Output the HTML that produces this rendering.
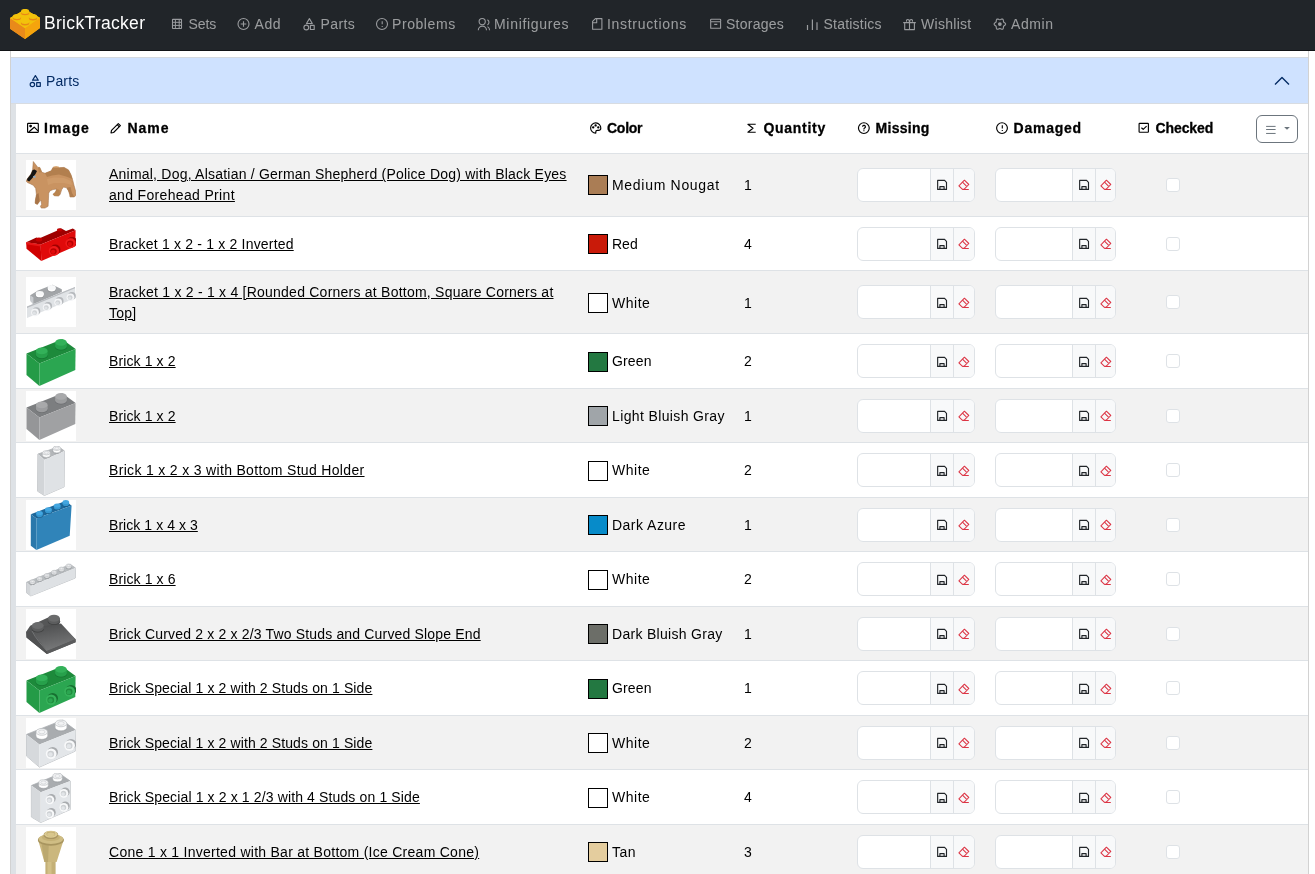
<!DOCTYPE html><html><head><meta charset="utf-8"><title>BrickTracker</title><style>
*{box-sizing:border-box;margin:0;padding:0}
html,body{width:1315px;height:874px;overflow:hidden;-webkit-font-smoothing:antialiased;background:#fff;font-family:"Liberation Sans", sans-serif;color:#212529;font-size:14px;line-height:21px}
.a{position:absolute}
.nav{position:absolute;left:0;top:0;width:1315px;height:51px;background:#212529;border-bottom:1px solid #111316}
.nl{position:absolute;top:13.65px;color:rgba(255,255,255,.55);white-space:nowrap;height:21px}
.nl svg,.th svg{position:absolute}
.card{position:absolute;left:10px;top:40px;width:1299px;height:900px;border:1px solid rgba(0,0,0,.175);border-radius:6px}
.hdr{position:absolute;left:11px;top:57px;width:1297px;height:47px;background:#cfe2ff;border-top:1px solid #d5dae0;border-bottom:1px solid #d8dce1}
.strip{position:absolute;left:11px;top:104px;width:5px;height:780px;background:#dee2e6}
.th{position:absolute;top:117.65px;font-weight:bold;white-space:nowrap;color:#000;-webkit-text-stroke:0.3px #000}
.row{position:absolute;left:16px;width:1292px;border-bottom:1px solid #dee2e6}
.st{background:#f2f2f2}
.nm{position:absolute;left:109px;color:#000;text-decoration:underline;text-underline-offset:1px;white-space:nowrap}
.sw{position:absolute;left:588px;width:20px;height:20px;border:1px solid #000}
.cn{position:absolute;left:612px;white-space:nowrap;color:#000}
.qt{position:absolute;left:744px;color:#000}
.ig{position:absolute;height:34px;border:1px solid #dee2e6;border-radius:6px;background:#fff;overflow:hidden}
.ig .b{position:absolute;top:0;height:32px;background:#f8f9fa;border-left:1px solid #dee2e6}
.ig svg{position:absolute}
.cb{position:absolute;left:1166px;width:14px;height:14px;border:1px solid #dee2e6;border-radius:3px;background:#fff}
.img{position:absolute;left:26px;width:50px;height:50px;background:#fff}
</style></head><body>
<div style="position:absolute;left:0;top:0;width:1315px;height:874px;will-change:transform">
<div class="card"></div>
<div class="hdr"></div>
<div class="strip"></div>
<div class="nav">
<svg class="a" style="left:10px;top:9px" width="30" height="30" viewBox="0 0 30 30"><path d="M0 9.1L15 0.6 30 8.8 30 19.1 15 30 0 19.7z" fill="#f2a60c"/><path d="M0 9.1L15 19.2 15 30 0 19.7z" fill="#e98a1a"/><path d="M15 19.2L30 8.8 30 19.1 15 30z" fill="#f5a40d"/><path d="M0 9.1L15 0.6 30 8.8 15 19.2z" fill="#f2c10a"/><ellipse cx="15.1" cy="3.7" rx="4.2" ry="2.5" fill="#e98816"/><ellipse cx="15.1" cy="2.4" rx="4.2" ry="2.5" fill="#f3c20c"/><ellipse cx="6.9" cy="8.700000000000001" rx="4.2" ry="2.5" fill="#e98816"/><ellipse cx="6.9" cy="7.4" rx="4.2" ry="2.5" fill="#f3c20c"/><ellipse cx="23" cy="8.9" rx="4.2" ry="2.5" fill="#e98816"/><ellipse cx="23" cy="7.6" rx="4.2" ry="2.5" fill="#f3c20c"/><ellipse cx="15.1" cy="13.9" rx="4.2" ry="2.5" fill="#e98816"/><ellipse cx="15.1" cy="12.6" rx="4.2" ry="2.5" fill="#f3c20c"/></svg>
<div class="a" style="left:44px;top:9.94px;letter-spacing:0.31px;font-size:17.5px;line-height:26px;color:#fff;white-space:nowrap">BrickTracker</div>
<svg class="a" style="left:168px;top:14px" width="20" height="20" viewBox="0 0 20 20" fill="none" stroke="#9a9c9f" stroke-width="1.1" stroke-linejoin="round"><rect x="4.5" y="5.4" width="9" height="9.1" rx="0.4"/><path d="M4.5 8.3h9M4.5 11.4h9M7.4 5.4v9.1M11.2 5.4v9.1" stroke-width="1"/></svg>
<div class="nl" style="left:188.5px;letter-spacing:-0.066px;">Sets</div>
<svg class="a" style="left:234px;top:14px" width="20" height="20" viewBox="0 0 20 20" fill="none" stroke="#9a9c9f" stroke-width="1.1" stroke-linejoin="round"><circle cx="9.5" cy="10" r="5.5"/><path d="M9.5 7.2v5.6M6.7 10h5.6"/></svg>
<div class="nl" style="left:254.5px;letter-spacing:0.6px;">Add</div>
<svg class="a" style="left:300px;top:14px" width="20" height="20" viewBox="0 0 20 20" fill="none" stroke="#9a9c9f" stroke-width="1.1" stroke-linejoin="round"><path d="M9.4 4.6L12.3 9.5H6.5Z"/><circle cx="6.3" cy="13.5" r="2.4"/><rect x="10.4" y="11.4" width="3.8" height="4.1"/></svg>
<div class="nl" style="left:320.5px;letter-spacing:0.4px;">Parts</div>
<svg class="a" style="left:372px;top:14px" width="20" height="20" viewBox="0 0 20 20" fill="none" stroke="#9a9c9f" stroke-width="1.1" stroke-linejoin="round"><circle cx="10" cy="10" r="5.5"/><path d="M10.2 7.3v3M10.2 12v1.1"/></svg>
<div class="nl" style="left:392px;letter-spacing:0.571px;">Problems</div>
<svg class="a" style="left:474px;top:14px" width="20" height="20" viewBox="0 0 20 20" fill="none" stroke="#9a9c9f" stroke-width="1.1" stroke-linejoin="round"><circle cx="8.2" cy="7.6" r="3.1"/><path d="M4.3 16.2a4.1 4.1 0 0 1 8.2 0"/><path d="M13.4 5.7a3 3 0 0 1 0 5.3M13.5 12.6c1.3.8 2.1 2 2.1 3.6"/></svg>
<div class="nl" style="left:494px;letter-spacing:0.69px;">Minifigures</div>
<svg class="a" style="left:588px;top:14px" width="20" height="20" viewBox="0 0 20 20" fill="none" stroke="#9a9c9f" stroke-width="1.1" stroke-linejoin="round"><path d="M7.4 4.6H13.9V15.3H4.6V7.4Z"/><path d="M8.7 4.8V8.8H4.8"/></svg>
<div class="nl" style="left:607px;letter-spacing:0.69px;">Instructions</div>
<svg class="a" style="left:706px;top:14px" width="20" height="20" viewBox="0 0 20 20" fill="none" stroke="#9a9c9f" stroke-width="1.1" stroke-linejoin="round"><rect x="4.6" y="5.3" width="10.1" height="2.4" rx="0.8"/><path d="M4.7 7.7V14.2H14.6V7.7M8.2 10.4h3.1"/></svg>
<div class="nl" style="left:726px;letter-spacing:0.243px;">Storages</div>
<svg class="a" style="left:802px;top:14px" width="20" height="20" viewBox="0 0 20 20" fill="none" stroke="#9a9c9f" stroke-width="1.1" stroke-linejoin="round"><path d="M5.5 10.9v5M10.4 5.4v10.5M15 8.2v7.7" stroke-width="1.2"/></svg>
<div class="nl" style="left:823.5px;letter-spacing:0.222px;">Statistics</div>
<svg class="a" style="left:900px;top:14px" width="20" height="20" viewBox="0 0 20 20" fill="none" stroke="#9a9c9f" stroke-width="1.1" stroke-linejoin="round"><path d="M3.2 8.6h12.6M4.7 8.6v7H14.4v-7M9.5 6.5v9.1"/><path d="M9.5 8.4C9.5 6.6 8.9 5.5 7.7 5.5 6.6 5.5 6.1 6.7 6.8 7.6M9.5 8.4c0-1.8.6-2.9 1.8-2.9 1.1 0 1.6 1.2.9 2.1"/></svg>
<div class="nl" style="left:921px;letter-spacing:0.286px;">Wishlist</div>
<svg class="a" style="left:990px;top:14px" width="20" height="20" viewBox="0 0 20 20" fill="none" stroke="#9a9c9f" stroke-width="1.1" stroke-linejoin="round"><path d="M15.65 10.10 L15.19 9.16 L14.24 8.50 L13.57 7.95 L13.43 7.09 L13.34 5.94 L12.75 5.08 L11.71 5.00 L10.66 5.50 L9.85 5.80 L9.04 5.50 L7.99 5.00 L6.95 5.08 L6.36 5.94 L6.27 7.09 L6.13 7.95 L5.46 8.50 L4.51 9.16 L4.05 10.10 L4.51 11.04 L5.46 11.70 L6.13 12.25 L6.27 13.11 L6.36 14.26 L6.95 15.12 L7.99 15.20 L9.04 14.70 L9.85 14.40 L10.66 14.70 L11.71 15.20 L12.75 15.12 L13.34 14.26 L13.43 13.11 L13.57 12.25 L14.24 11.70 L15.19 11.04Z"/><circle cx="9.85" cy="10.1" r="1.9" fill="#9a9c9f" stroke="none"/></svg>
<div class="nl" style="left:1011px;letter-spacing:0.6px;">Admin</div>
</div>
<svg class="a" style="left:25px;top:71px" width="20" height="20" viewBox="0 0 20 20" fill="none" stroke="#052c65" stroke-width="1.2" stroke-linejoin="round"><path d="M10.4 4.6L13.3 9.2H7.5Z"/><circle cx="7.4" cy="13.5" r="2.2"/><rect x="11.7" y="11.7" width="3.6" height="3.6"/></svg>
<div class="a" style="left:46px;top:70.65px;color:#052c65;letter-spacing:0.125px;">Parts</div>
<svg class="a" style="left:1270px;top:70px" width="24" height="24" viewBox="0 0 24 24" fill="none" stroke="#052c65" stroke-width="1.4" stroke-linejoin="round"><path d="M5 14.6L12 7.6l7 7"/></svg>
<svg class="a" style="left:23px;top:118px" width="20" height="20" viewBox="0 0 20 20" fill="none" stroke="#000" stroke-width="1.15" stroke-linejoin="round"><rect x="4.6" y="5.4" width="10.7" height="9" rx="0.6"/><path d="M5.8 14L11.2 9.2 15 12.8"/><circle cx="7.6" cy="8.1" r="0.8" fill="#000"/></svg>
<div class="th" style="left:44px;letter-spacing:1.1px;">Image</div>
<svg class="a" style="left:106px;top:118px" width="20" height="20" viewBox="0 0 20 20" fill="none" stroke="#000" stroke-width="1.15" stroke-linejoin="round"><path d="M5 14.9L5.5 12.4 12.3 5.6 14.4 7.7 7.6 14.5Z"/><path d="M11.2 6.7l2.1 2.1"/></svg>
<div class="th" style="left:127.5px;letter-spacing:0.967px;">Name</div>
<svg class="a" style="left:586px;top:118px" width="20" height="20" viewBox="0 0 20 20" fill="none" stroke="#000" stroke-width="1.15" stroke-linejoin="round"><path d="M9.8 15.1A5.1 5.1 0 1 1 14.8 10.3C14.8 11.6 13.8 12.4 12.4 12.4H11.2C10.4 12.4 9.8 13 9.8 13.8Z"/><circle cx="7.2" cy="9.3" r="0.6" fill="#000"/><circle cx="9.6" cy="7.4" r="0.6" fill="#000"/><circle cx="12.3" cy="9.3" r="0.6" fill="#000"/></svg>
<div class="th" style="left:607px;letter-spacing:-0.25px;">Color</div>
<svg class="a" style="left:742px;top:118px" width="20" height="20" viewBox="0 0 20 20" fill="none" stroke="#000" stroke-width="1.15" stroke-linejoin="round"><path d="M13.7 6.2H5.9L11 10.3 5.9 14.2H13.7"/></svg>
<div class="th" style="left:763.5px;letter-spacing:0.7px;">Quantity</div>
<svg class="a" style="left:854px;top:118px" width="20" height="20" viewBox="0 0 20 20" fill="none" stroke="#000" stroke-width="1.15" stroke-linejoin="round"><circle cx="9.85" cy="10.1" r="5.4"/><path d="M8.6 8.7a1.4 1.4 0 1 1 2 1.3c-.5.3-.7.6-.7 1.1v.3M9.9 12.2v1"/></svg>
<div class="th" style="left:875.5px;letter-spacing:0.3px;">Missing</div>
<svg class="a" style="left:992px;top:118px" width="20" height="20" viewBox="0 0 20 20" fill="none" stroke="#000" stroke-width="1.15" stroke-linejoin="round"><circle cx="10" cy="10.1" r="5.4"/><path d="M10.3 7.2v3.2M10.3 12v1.1"/></svg>
<div class="th" style="left:1013.5px;letter-spacing:0.766px;">Damaged</div>
<svg class="a" style="left:1134px;top:118px" width="20" height="20" viewBox="0 0 20 20" fill="none" stroke="#000" stroke-width="1.15" stroke-linejoin="round"><rect x="5.1" y="5.4" width="9.3" height="8.8" rx="0.5"/><path d="M7.4 9.7L9.2 11.3 12.6 8.2"/></svg>
<div class="th" style="left:1155.5px;letter-spacing:-0.099px;">Checked</div>
<div class="a" style="left:1256px;top:115px;width:42px;height:28px;border:1px solid #6c757d;border-radius:6px"></div><svg class="a" style="left:1264px;top:119px" width="14" height="18" viewBox="0 0 14 18" fill="none" stroke="#6c757d" stroke-width="1.0" stroke-linejoin="round"><path d="M2.1 7.4h9.5M2.1 10.5h9.5M2.1 14.45h9.5"/></svg><svg class="a" style="left:1283px;top:126px" width="8" height="5" viewBox="0 0 8 5" fill="#6c757d"><path d="M1.1 0.9H6.9L4 3.8z"/></svg>
<div class="a" style="left:16px;top:153px;width:1292px;height:1px;background:#dee2e6"></div>
<div class="row st" style="top:154px;height:63px"></div>
<div class="img" style="top:159.90px"><svg width="50" height="50" viewBox="0 0 50 50"><polygon points="7.30,1.50 11.90,7.40 13.80,7.40 15.90,12.30 19.00,13.25 25.20,10.80 27.00,7.40 33.20,7.70 38.10,7.40 42.50,9.90 45.00,14.80 46.80,20.40 48.00,25.30 49.60,30.90 50.00,35.20 48.30,37.00 44.00,37.00 43.70,34.60 42.50,30.90 40.60,27.80 37.50,27.10 35.70,29.60 34.10,34.60 32.30,36.10 28.30,35.80 27.00,34.30 29.50,32.10 30.70,29.00 27.00,29.60 23.90,30.90 22.70,33.30 22.40,40.70 22.10,46.30 19.00,48.10 15.30,48.10 14.40,46.30 15.60,44.40 15.00,40.10 12.80,42.60 11.30,44.40 9.10,43.20 9.40,40.10 10.40,34.60 9.70,28.40 7.30,25.30 4.20,23.75 1.40,22.50 0.16,21.30 1.10,19.10 4.80,14.20 6.60,9.90" fill="#c99361" stroke="#9c6a40" stroke-width="0.5"/><polygon points="19.00,13.25 25.20,10.80 27.00,7.40 33.20,7.70 38.10,7.40 42.50,9.90 45.00,14.80 46.50,19.00 40.00,16.50 33.00,14.50 26.00,15.50 21.00,17.00" fill="#b27f4e"/><polygon points="21.00,19.00 28.00,17.50 38.00,18.00 45.00,21.00 46.00,25.00 38.00,23.00 28.00,23.00 22.00,25.00" fill="#cf9b69"/><polygon points="9.40,40.10 10.40,34.60 12.50,33.00 13.50,40.00 12.80,42.60 11.30,44.40 9.10,43.20" fill="#a87548"/><polygon points="40.60,27.80 42.50,30.90 43.70,34.60 44.00,37.00 48.30,37.00 46.00,33.00 44.50,27.00" fill="#b07d4e"/><polygon points="27.00,34.30 29.50,32.10 30.70,29.00 33.50,30.00 34.10,34.60 32.30,36.10 28.30,35.80" fill="#b9844f"/><polygon points="11.90,7.40 13.80,7.40 15.90,12.30 13.00,12.50" fill="#b8834f"/><ellipse cx="30.1" cy="7.6" rx="3" ry="1.5" fill="#dcab78"/><path d="M27.1 7.6v1.2a3 1.5 0 0 0 6 0v-1.2" fill="#b5814e"/><polygon points="1.10,19.10 4.80,14.20 6.60,9.90 8.50,9.60 11.00,11.00 9.50,14.00 6.00,18.50 3.20,21.50 1.20,20.50" fill="#141414"/><ellipse cx="8.4" cy="16.8" rx="1.4" ry="1.1" fill="#8ea8c2"/></svg></div>
<div class="nm" style="top:164.25px;letter-spacing:0.218px;">Animal, Dog, Alsatian / German Shepherd (Police Dog) with Black Eyes</div>
<div class="nm" style="top:185.25px;letter-spacing:0.336px;">and Forehead Print</div>
<div class="sw" style="top:175.40px;background:#AA7D55"></div>
<div class="cn" style="top:175.00px;letter-spacing:0.699px;">Medium Nougat</div>
<div class="qt" style="top:175.00px">1</div>
<div class="ig" style="left:857px;top:167.90px;width:118px"><div class="b" style="left:72px;width:24px"><svg class="a" style="left:0.5px;top:6.5px" width="20" height="20" viewBox="0 0 20 20" fill="none" stroke="#212529" stroke-width="1.15" stroke-linejoin="round"><path d="M5.65 5.4H12.6L14.5 7.3V14.4H5.65Z"/><path d="M7.9 14.3V11.6H12.1V14.3"/></svg></div><div class="b" style="left:95px;width:23px"><svg class="a" style="left:0.0px;top:6.5px" width="20" height="20" viewBox="0 0 20 20" fill="none" stroke="#dc3545" stroke-width="1.05" stroke-linejoin="round"><path d="M10.4 5.2L14.8 9.5 10 14.3H8.5L4.9 10.8Z"/><path d="M8.5 7.1l4 4.1M8.5 14.4h6.3"/></svg></div></div>
<div class="ig" style="left:995px;top:167.90px;width:121px"><div class="b" style="left:76px;width:24px"><svg class="a" style="left:0.5px;top:6.5px" width="20" height="20" viewBox="0 0 20 20" fill="none" stroke="#212529" stroke-width="1.15" stroke-linejoin="round"><path d="M5.65 5.4H12.6L14.5 7.3V14.4H5.65Z"/><path d="M7.9 14.3V11.6H12.1V14.3"/></svg></div><div class="b" style="left:99px;width:22px"><svg class="a" style="left:-0.5px;top:6.5px" width="20" height="20" viewBox="0 0 20 20" fill="none" stroke="#dc3545" stroke-width="1.05" stroke-linejoin="round"><path d="M10.4 5.2L14.8 9.5 10 14.3H8.5L4.9 10.8Z"/><path d="M8.5 7.1l4 4.1M8.5 14.4h6.3"/></svg></div></div>
<div class="cb" style="top:177.90px"></div>
<div class="row" style="top:217px;height:54px"></div>
<div class="img" style="top:219.15px"><svg width="50" height="50" viewBox="0 0 50 50"><polygon points="0.20,23.30 10.40,18.50 13.00,19.50 31.40,11.50 31.40,9.70 35.00,9.20 40.00,12.00 46.80,9.50 49.60,11.20 14.70,25.40" fill="#9e0000"/><polygon points="0.20,23.30 14.70,25.40 15.30,42.10 0.50,29.80" fill="#d00000"/><polygon points="0.20,23.30 14.70,25.40 14.80,27.50 0.30,25.30" fill="#e81515"/><polygon points="14.70,25.40 49.60,11.20 49.30,27.30 15.30,42.10" fill="#e00a0a"/><ellipse cx="13" cy="20.5" rx="3.2" ry="2" fill="#c40000"/><ellipse cx="33.5" cy="11" rx="2.6" ry="1.6" fill="#c40000"/><ellipse cx="29.3" cy="30.6" rx="5.2" ry="5.0" fill="#a00000"/><ellipse cx="27.9" cy="32.0" rx="5.2" ry="5.0" fill="#f01a1a"/><ellipse cx="27.5" cy="32.3" rx="3.224" ry="3.1" fill="#b80000"/><ellipse cx="27.1" cy="32.8" rx="2.184" ry="2.1" fill="#e00a0a"/><ellipse cx="46.0" cy="22.900000000000002" rx="5.2" ry="5.0" fill="#a00000"/><ellipse cx="44.6" cy="24.3" rx="5.2" ry="5.0" fill="#f01a1a"/><ellipse cx="44.2" cy="24.6" rx="3.224" ry="3.1" fill="#b80000"/><ellipse cx="43.800000000000004" cy="25.1" rx="2.184" ry="2.1" fill="#e00a0a"/></svg></div>
<div class="nm" style="top:233.75px;letter-spacing:0.191px;">Bracket 1 x 2 - 1 x 2 Inverted</div>
<div class="sw" style="top:234.15px;background:#C91A09"></div>
<div class="cn" style="top:233.75px;letter-spacing:0.0px;">Red</div>
<div class="qt" style="top:233.75px">4</div>
<div class="ig" style="left:857px;top:226.65px;width:118px"><div class="b" style="left:72px;width:24px"><svg class="a" style="left:0.5px;top:6.5px" width="20" height="20" viewBox="0 0 20 20" fill="none" stroke="#212529" stroke-width="1.15" stroke-linejoin="round"><path d="M5.65 5.4H12.6L14.5 7.3V14.4H5.65Z"/><path d="M7.9 14.3V11.6H12.1V14.3"/></svg></div><div class="b" style="left:95px;width:23px"><svg class="a" style="left:0.0px;top:6.5px" width="20" height="20" viewBox="0 0 20 20" fill="none" stroke="#dc3545" stroke-width="1.05" stroke-linejoin="round"><path d="M10.4 5.2L14.8 9.5 10 14.3H8.5L4.9 10.8Z"/><path d="M8.5 7.1l4 4.1M8.5 14.4h6.3"/></svg></div></div>
<div class="ig" style="left:995px;top:226.65px;width:121px"><div class="b" style="left:76px;width:24px"><svg class="a" style="left:0.5px;top:6.5px" width="20" height="20" viewBox="0 0 20 20" fill="none" stroke="#212529" stroke-width="1.15" stroke-linejoin="round"><path d="M5.65 5.4H12.6L14.5 7.3V14.4H5.65Z"/><path d="M7.9 14.3V11.6H12.1V14.3"/></svg></div><div class="b" style="left:99px;width:22px"><svg class="a" style="left:-0.5px;top:6.5px" width="20" height="20" viewBox="0 0 20 20" fill="none" stroke="#dc3545" stroke-width="1.05" stroke-linejoin="round"><path d="M10.4 5.2L14.8 9.5 10 14.3H8.5L4.9 10.8Z"/><path d="M8.5 7.1l4 4.1M8.5 14.4h6.3"/></svg></div></div>
<div class="cb" style="top:236.65px"></div>
<div class="row st" style="top:271px;height:63px"></div>
<div class="img" style="top:277.40px"><svg width="50" height="50" viewBox="0 0 50 50"><polygon points="4.20,18.20 12.00,13.60 26.60,7.70 35.80,12.30 35.80,15.00 7.40,27.50 4.20,22.00" fill="#a2a5a8"/><polygon points="4.20,18.20 7.40,20.50 7.40,27.50 4.20,24.00" fill="#c9ccd0"/><polygon points="1.00,29.60 49.00,10.00 49.50,21.00 1.00,41.10" fill="#e0e3e6"/><polygon points="1.00,29.60 49.00,10.00 49.00,11.30 1.00,30.90" fill="#b9bcc0"/><ellipse cx="10.4" cy="34.0" rx="3.9" ry="3.8" fill="#b5b8bc"/><ellipse cx="9.0" cy="35.4" rx="3.9" ry="3.8" fill="#f4f5f7"/><ellipse cx="8.6" cy="35.699999999999996" rx="2.418" ry="2.356" fill="#cfd2d5"/><ellipse cx="8.2" cy="36.199999999999996" rx="1.638" ry="1.5959999999999999" fill="#e0e3e6"/><ellipse cx="22.1" cy="28.900000000000002" rx="3.9" ry="3.8" fill="#b5b8bc"/><ellipse cx="20.7" cy="30.3" rx="3.9" ry="3.8" fill="#f4f5f7"/><ellipse cx="20.3" cy="30.6" rx="2.418" ry="2.356" fill="#cfd2d5"/><ellipse cx="19.900000000000002" cy="31.1" rx="1.638" ry="1.5959999999999999" fill="#e0e3e6"/><ellipse cx="33.599999999999994" cy="23.900000000000002" rx="3.9" ry="3.8" fill="#b5b8bc"/><ellipse cx="32.199999999999996" cy="25.3" rx="3.9" ry="3.8" fill="#f4f5f7"/><ellipse cx="31.799999999999997" cy="25.6" rx="2.418" ry="2.356" fill="#cfd2d5"/><ellipse cx="31.4" cy="26.1" rx="1.638" ry="1.5959999999999999" fill="#e0e3e6"/><ellipse cx="45.9" cy="18.900000000000002" rx="3.9" ry="3.8" fill="#b5b8bc"/><ellipse cx="44.5" cy="20.3" rx="3.9" ry="3.8" fill="#f4f5f7"/><ellipse cx="44.1" cy="20.6" rx="2.418" ry="2.356" fill="#cfd2d5"/><ellipse cx="43.7" cy="21.1" rx="1.638" ry="1.5959999999999999" fill="#e0e3e6"/><ellipse cx="13.8" cy="18.500000000000004" rx="4.2" ry="2.6" fill="#8e9194"/><ellipse cx="13.8" cy="17.900000000000002" rx="3.9" ry="2.4" fill="#ffffff"/><rect x="9.9" y="16.3" width="7.8" height="1.6" fill="#ffffff"/><ellipse cx="13.8" cy="16.3" rx="3.9" ry="2.4" fill="#f7f8f9"/><ellipse cx="25.7" cy="12.6" rx="4.2" ry="2.6" fill="#8e9194"/><ellipse cx="25.7" cy="12.0" rx="3.9" ry="2.4" fill="#ffffff"/><rect x="21.8" y="10.4" width="7.8" height="1.6" fill="#ffffff"/><ellipse cx="25.7" cy="10.4" rx="3.9" ry="2.4" fill="#f7f8f9"/></svg></div>
<div class="nm" style="top:281.75px;letter-spacing:0.235px;">Bracket 1 x 2 - 1 x 4 [Rounded Corners at Bottom, Square Corners at</div>
<div class="nm" style="top:302.75px;letter-spacing:0.233px;">Top]</div>
<div class="sw" style="top:292.90px;background:#FFFFFF"></div>
<div class="cn" style="top:292.50px;letter-spacing:0.525px;">White</div>
<div class="qt" style="top:292.50px">1</div>
<div class="ig" style="left:857px;top:285.40px;width:118px"><div class="b" style="left:72px;width:24px"><svg class="a" style="left:0.5px;top:6.5px" width="20" height="20" viewBox="0 0 20 20" fill="none" stroke="#212529" stroke-width="1.15" stroke-linejoin="round"><path d="M5.65 5.4H12.6L14.5 7.3V14.4H5.65Z"/><path d="M7.9 14.3V11.6H12.1V14.3"/></svg></div><div class="b" style="left:95px;width:23px"><svg class="a" style="left:0.0px;top:6.5px" width="20" height="20" viewBox="0 0 20 20" fill="none" stroke="#dc3545" stroke-width="1.05" stroke-linejoin="round"><path d="M10.4 5.2L14.8 9.5 10 14.3H8.5L4.9 10.8Z"/><path d="M8.5 7.1l4 4.1M8.5 14.4h6.3"/></svg></div></div>
<div class="ig" style="left:995px;top:285.40px;width:121px"><div class="b" style="left:76px;width:24px"><svg class="a" style="left:0.5px;top:6.5px" width="20" height="20" viewBox="0 0 20 20" fill="none" stroke="#212529" stroke-width="1.15" stroke-linejoin="round"><path d="M5.65 5.4H12.6L14.5 7.3V14.4H5.65Z"/><path d="M7.9 14.3V11.6H12.1V14.3"/></svg></div><div class="b" style="left:99px;width:22px"><svg class="a" style="left:-0.5px;top:6.5px" width="20" height="20" viewBox="0 0 20 20" fill="none" stroke="#dc3545" stroke-width="1.05" stroke-linejoin="round"><path d="M10.4 5.2L14.8 9.5 10 14.3H8.5L4.9 10.8Z"/><path d="M8.5 7.1l4 4.1M8.5 14.4h6.3"/></svg></div></div>
<div class="cb" style="top:295.40px"></div>
<div class="row" style="top:334px;height:55px"></div>
<div class="img" style="top:336.65px"><svg width="50" height="50" viewBox="0 0 50 50"><polygon points="0.50,16.40 13.40,26.60 49.60,12.10 36.30,2.20" fill="#1d8a3b"/><polygon points="0.50,16.40 13.40,26.60 13.40,49.10 0.50,38.00" fill="#249b47"/><polygon points="13.40,26.60 49.60,12.10 49.30,33.10 13.40,49.10" fill="#2ba651"/><ellipse cx="15.8" cy="18.5" rx="6.1" ry="3.6" fill="#177533"/><ellipse cx="15.8" cy="17.9" rx="5.8" ry="3.4" fill="#27a04b"/><rect x="10.0" y="13.9" width="11.6" height="4.0" fill="#27a04b"/><ellipse cx="15.8" cy="13.9" rx="5.8" ry="3.4" fill="#33b159"/><ellipse cx="35" cy="10.0" rx="6.1" ry="3.6" fill="#177533"/><ellipse cx="35" cy="9.4" rx="5.8" ry="3.4" fill="#27a04b"/><rect x="29.2" y="5.4" width="11.6" height="4.0" fill="#27a04b"/><ellipse cx="35" cy="5.4" rx="5.8" ry="3.4" fill="#33b159"/></svg></div>
<div class="nm" style="top:351.25px;letter-spacing:0.113px;">Brick 1 x 2</div>
<div class="sw" style="top:351.65px;background:#237841"></div>
<div class="cn" style="top:351.25px;letter-spacing:0.15px;">Green</div>
<div class="qt" style="top:351.25px">2</div>
<div class="ig" style="left:857px;top:344.15px;width:118px"><div class="b" style="left:72px;width:24px"><svg class="a" style="left:0.5px;top:6.5px" width="20" height="20" viewBox="0 0 20 20" fill="none" stroke="#212529" stroke-width="1.15" stroke-linejoin="round"><path d="M5.65 5.4H12.6L14.5 7.3V14.4H5.65Z"/><path d="M7.9 14.3V11.6H12.1V14.3"/></svg></div><div class="b" style="left:95px;width:23px"><svg class="a" style="left:0.0px;top:6.5px" width="20" height="20" viewBox="0 0 20 20" fill="none" stroke="#dc3545" stroke-width="1.05" stroke-linejoin="round"><path d="M10.4 5.2L14.8 9.5 10 14.3H8.5L4.9 10.8Z"/><path d="M8.5 7.1l4 4.1M8.5 14.4h6.3"/></svg></div></div>
<div class="ig" style="left:995px;top:344.15px;width:121px"><div class="b" style="left:76px;width:24px"><svg class="a" style="left:0.5px;top:6.5px" width="20" height="20" viewBox="0 0 20 20" fill="none" stroke="#212529" stroke-width="1.15" stroke-linejoin="round"><path d="M5.65 5.4H12.6L14.5 7.3V14.4H5.65Z"/><path d="M7.9 14.3V11.6H12.1V14.3"/></svg></div><div class="b" style="left:99px;width:22px"><svg class="a" style="left:-0.5px;top:6.5px" width="20" height="20" viewBox="0 0 20 20" fill="none" stroke="#dc3545" stroke-width="1.05" stroke-linejoin="round"><path d="M10.4 5.2L14.8 9.5 10 14.3H8.5L4.9 10.8Z"/><path d="M8.5 7.1l4 4.1M8.5 14.4h6.3"/></svg></div></div>
<div class="cb" style="top:354.15px"></div>
<div class="row st" style="top:389px;height:54px"></div>
<div class="img" style="top:391.15px"><svg width="50" height="50" viewBox="0 0 50 50"><polygon points="0.50,16.40 13.40,26.60 49.60,12.10 36.30,2.20" fill="#7c7e80"/><polygon points="0.50,16.40 13.40,26.60 13.40,49.10 0.50,38.00" fill="#959698"/><polygon points="13.40,26.60 49.60,12.10 49.30,33.10 13.40,49.10" fill="#a0a1a3"/><ellipse cx="15.8" cy="18.5" rx="6.1" ry="3.6" fill="#6e7072"/><ellipse cx="15.8" cy="17.9" rx="5.8" ry="3.4" fill="#9c9d9f"/><rect x="10.0" y="13.9" width="11.6" height="4.0" fill="#9c9d9f"/><ellipse cx="15.8" cy="13.9" rx="5.8" ry="3.4" fill="#a8a9ab"/><ellipse cx="35" cy="10.0" rx="6.1" ry="3.6" fill="#6e7072"/><ellipse cx="35" cy="9.4" rx="5.8" ry="3.4" fill="#9c9d9f"/><rect x="29.2" y="5.4" width="11.6" height="4.0" fill="#9c9d9f"/><ellipse cx="35" cy="5.4" rx="5.8" ry="3.4" fill="#a8a9ab"/></svg></div>
<div class="nm" style="top:405.75px;letter-spacing:0.113px;">Brick 1 x 2</div>
<div class="sw" style="top:406.15px;background:#A0A5A9"></div>
<div class="cn" style="top:405.75px;letter-spacing:0.369px;">Light Bluish Gray</div>
<div class="qt" style="top:405.75px">1</div>
<div class="ig" style="left:857px;top:398.65px;width:118px"><div class="b" style="left:72px;width:24px"><svg class="a" style="left:0.5px;top:6.5px" width="20" height="20" viewBox="0 0 20 20" fill="none" stroke="#212529" stroke-width="1.15" stroke-linejoin="round"><path d="M5.65 5.4H12.6L14.5 7.3V14.4H5.65Z"/><path d="M7.9 14.3V11.6H12.1V14.3"/></svg></div><div class="b" style="left:95px;width:23px"><svg class="a" style="left:0.0px;top:6.5px" width="20" height="20" viewBox="0 0 20 20" fill="none" stroke="#dc3545" stroke-width="1.05" stroke-linejoin="round"><path d="M10.4 5.2L14.8 9.5 10 14.3H8.5L4.9 10.8Z"/><path d="M8.5 7.1l4 4.1M8.5 14.4h6.3"/></svg></div></div>
<div class="ig" style="left:995px;top:398.65px;width:121px"><div class="b" style="left:76px;width:24px"><svg class="a" style="left:0.5px;top:6.5px" width="20" height="20" viewBox="0 0 20 20" fill="none" stroke="#212529" stroke-width="1.15" stroke-linejoin="round"><path d="M5.65 5.4H12.6L14.5 7.3V14.4H5.65Z"/><path d="M7.9 14.3V11.6H12.1V14.3"/></svg></div><div class="b" style="left:99px;width:22px"><svg class="a" style="left:-0.5px;top:6.5px" width="20" height="20" viewBox="0 0 20 20" fill="none" stroke="#dc3545" stroke-width="1.05" stroke-linejoin="round"><path d="M10.4 5.2L14.8 9.5 10 14.3H8.5L4.9 10.8Z"/><path d="M8.5 7.1l4 4.1M8.5 14.4h6.3"/></svg></div></div>
<div class="cb" style="top:408.65px"></div>
<div class="row" style="top:443px;height:55px"></div>
<div class="img" style="top:445.65px"><svg width="50" height="50" viewBox="0 0 50 50"><polygon points="11.90,8.10 32.60,0.70 38.50,5.00 38.10,40.90 18.40,49.50 11.60,45.20" fill="none" stroke="#b9bcbf" stroke-width="0.9"/><polygon points="11.90,8.10 18.40,13.70 38.50,5.00 32.60,0.70" fill="#b3b6b9"/><polygon points="11.90,8.10 18.40,13.70 18.40,49.50 11.60,45.20" fill="#d2d5d8"/><polygon points="18.40,13.70 38.50,5.00 38.10,40.90 18.40,49.50" fill="#dfe2e5"/><ellipse cx="20.4" cy="9.799999999999999" rx="4.1" ry="2.4000000000000004" fill="#9a9da0"/><ellipse cx="20.4" cy="9.2" rx="3.8" ry="2.2" fill="#ffffff"/><rect x="16.599999999999998" y="6.8" width="7.6" height="2.4" fill="#ffffff"/><path d="M16.599999999999998 6.8v2.4a3.8 2.2 0 0 0 7.6 0v-2.4" fill="none" stroke="#b4b7ba" stroke-width="0.6"/><ellipse cx="20.4" cy="6.8" rx="3.8" ry="2.2" fill="#f3f4f5" stroke="#b4b7ba" stroke-width="0.6"/><ellipse cx="20.4" cy="6.8" rx="2.09" ry="1.2100000000000002" fill="none" stroke="#b4b7ba" stroke-width="0.4"/><ellipse cx="30.8" cy="5.299999999999999" rx="4.1" ry="2.4000000000000004" fill="#9a9da0"/><ellipse cx="30.8" cy="4.699999999999999" rx="3.8" ry="2.2" fill="#ffffff"/><rect x="27.0" y="2.3" width="7.6" height="2.4" fill="#ffffff"/><path d="M27.0 2.3v2.4a3.8 2.2 0 0 0 7.6 0v-2.4" fill="none" stroke="#b4b7ba" stroke-width="0.6"/><ellipse cx="30.8" cy="2.3" rx="3.8" ry="2.2" fill="#f3f4f5" stroke="#b4b7ba" stroke-width="0.6"/><ellipse cx="30.8" cy="2.3" rx="2.09" ry="1.2100000000000002" fill="none" stroke="#b4b7ba" stroke-width="0.4"/></svg></div>
<div class="nm" style="top:460.25px;letter-spacing:0.327px;">Brick 1 x 2 x 3 with Bottom Stud Holder</div>
<div class="sw" style="top:460.65px;background:#FFFFFF"></div>
<div class="cn" style="top:460.25px;letter-spacing:0.525px;">White</div>
<div class="qt" style="top:460.25px">2</div>
<div class="ig" style="left:857px;top:453.15px;width:118px"><div class="b" style="left:72px;width:24px"><svg class="a" style="left:0.5px;top:6.5px" width="20" height="20" viewBox="0 0 20 20" fill="none" stroke="#212529" stroke-width="1.15" stroke-linejoin="round"><path d="M5.65 5.4H12.6L14.5 7.3V14.4H5.65Z"/><path d="M7.9 14.3V11.6H12.1V14.3"/></svg></div><div class="b" style="left:95px;width:23px"><svg class="a" style="left:0.0px;top:6.5px" width="20" height="20" viewBox="0 0 20 20" fill="none" stroke="#dc3545" stroke-width="1.05" stroke-linejoin="round"><path d="M10.4 5.2L14.8 9.5 10 14.3H8.5L4.9 10.8Z"/><path d="M8.5 7.1l4 4.1M8.5 14.4h6.3"/></svg></div></div>
<div class="ig" style="left:995px;top:453.15px;width:121px"><div class="b" style="left:76px;width:24px"><svg class="a" style="left:0.5px;top:6.5px" width="20" height="20" viewBox="0 0 20 20" fill="none" stroke="#212529" stroke-width="1.15" stroke-linejoin="round"><path d="M5.65 5.4H12.6L14.5 7.3V14.4H5.65Z"/><path d="M7.9 14.3V11.6H12.1V14.3"/></svg></div><div class="b" style="left:99px;width:22px"><svg class="a" style="left:-0.5px;top:6.5px" width="20" height="20" viewBox="0 0 20 20" fill="none" stroke="#dc3545" stroke-width="1.05" stroke-linejoin="round"><path d="M10.4 5.2L14.8 9.5 10 14.3H8.5L4.9 10.8Z"/><path d="M8.5 7.1l4 4.1M8.5 14.4h6.3"/></svg></div></div>
<div class="cb" style="top:463.15px"></div>
<div class="row st" style="top:498px;height:54px"></div>
<div class="img" style="top:500.15px"><svg width="50" height="50" viewBox="0 0 50 50"><polygon points="4.80,14.20 10.40,18.50 45.60,5.50 38.80,1.20" fill="#1d679a"/><polygon points="4.80,14.20 10.40,18.50 10.40,50.00 4.80,45.70" fill="#2a78ab"/><polygon points="10.40,18.50 45.60,5.50 43.70,35.80 10.40,50.00" fill="#3084b9"/><ellipse cx="13.5" cy="15.5" rx="3.5999999999999996" ry="2.2" fill="#185a86"/><ellipse cx="13.5" cy="14.9" rx="3.3" ry="2.0" fill="#3596cf"/><rect x="10.2" y="12.9" width="6.6" height="2.0" fill="#3596cf"/><ellipse cx="13.5" cy="12.9" rx="3.3" ry="2.0" fill="#43a6e0"/><ellipse cx="22.4" cy="11.799999999999999" rx="3.5999999999999996" ry="2.2" fill="#185a86"/><ellipse cx="22.4" cy="11.2" rx="3.3" ry="2.0" fill="#3596cf"/><rect x="19.099999999999998" y="9.2" width="6.6" height="2.0" fill="#3596cf"/><ellipse cx="22.4" cy="9.2" rx="3.3" ry="2.0" fill="#43a6e0"/><ellipse cx="31.2" cy="8.1" rx="3.5999999999999996" ry="2.2" fill="#185a86"/><ellipse cx="31.2" cy="7.5" rx="3.3" ry="2.0" fill="#3596cf"/><rect x="27.9" y="5.5" width="6.6" height="2.0" fill="#3596cf"/><ellipse cx="31.2" cy="5.5" rx="3.3" ry="2.0" fill="#43a6e0"/><ellipse cx="39.8" cy="4.6" rx="3.5999999999999996" ry="2.2" fill="#185a86"/><ellipse cx="39.8" cy="4.0" rx="3.3" ry="2.0" fill="#3596cf"/><rect x="36.5" y="2.0" width="6.6" height="2.0" fill="#3596cf"/><ellipse cx="39.8" cy="2.0" rx="3.3" ry="2.0" fill="#43a6e0"/></svg></div>
<div class="nm" style="top:514.75px;letter-spacing:0.059px;">Brick 1 x 4 x 3</div>
<div class="sw" style="top:515.15px;background:#078BC9"></div>
<div class="cn" style="top:514.75px;letter-spacing:0.478px;">Dark Azure</div>
<div class="qt" style="top:514.75px">1</div>
<div class="ig" style="left:857px;top:507.65px;width:118px"><div class="b" style="left:72px;width:24px"><svg class="a" style="left:0.5px;top:6.5px" width="20" height="20" viewBox="0 0 20 20" fill="none" stroke="#212529" stroke-width="1.15" stroke-linejoin="round"><path d="M5.65 5.4H12.6L14.5 7.3V14.4H5.65Z"/><path d="M7.9 14.3V11.6H12.1V14.3"/></svg></div><div class="b" style="left:95px;width:23px"><svg class="a" style="left:0.0px;top:6.5px" width="20" height="20" viewBox="0 0 20 20" fill="none" stroke="#dc3545" stroke-width="1.05" stroke-linejoin="round"><path d="M10.4 5.2L14.8 9.5 10 14.3H8.5L4.9 10.8Z"/><path d="M8.5 7.1l4 4.1M8.5 14.4h6.3"/></svg></div></div>
<div class="ig" style="left:995px;top:507.65px;width:121px"><div class="b" style="left:76px;width:24px"><svg class="a" style="left:0.5px;top:6.5px" width="20" height="20" viewBox="0 0 20 20" fill="none" stroke="#212529" stroke-width="1.15" stroke-linejoin="round"><path d="M5.65 5.4H12.6L14.5 7.3V14.4H5.65Z"/><path d="M7.9 14.3V11.6H12.1V14.3"/></svg></div><div class="b" style="left:99px;width:22px"><svg class="a" style="left:-0.5px;top:6.5px" width="20" height="20" viewBox="0 0 20 20" fill="none" stroke="#dc3545" stroke-width="1.05" stroke-linejoin="round"><path d="M10.4 5.2L14.8 9.5 10 14.3H8.5L4.9 10.8Z"/><path d="M8.5 7.1l4 4.1M8.5 14.4h6.3"/></svg></div></div>
<div class="cb" style="top:517.65px"></div>
<div class="row" style="top:552px;height:55px"></div>
<div class="img" style="top:554.65px"><svg width="50" height="50" viewBox="0 0 50 50"><polygon points="0.50,27.30 44.30,9.40 49.60,13.10 49.30,23.00 4.80,40.90 0.50,37.80" fill="none" stroke="#b9bcbf" stroke-width="0.9"/><polygon points="0.50,27.30 4.80,31.00 49.60,13.10 44.30,9.40" fill="#b8bcbf"/><polygon points="0.50,27.30 4.80,31.00 4.80,40.90 0.50,37.80" fill="#d3d6d9"/><polygon points="4.80,31.00 49.60,13.10 49.30,23.00 4.80,40.90" fill="#dee1e4"/><ellipse cx="6.4" cy="28.2" rx="2.9" ry="1.8" fill="#9a9da0"/><ellipse cx="6.4" cy="27.599999999999998" rx="2.6" ry="1.6" fill="#ffffff"/><rect x="3.8000000000000003" y="26.4" width="5.2" height="1.2" fill="#ffffff"/><path d="M3.8000000000000003 26.4v1.2a2.6 1.6 0 0 0 5.2 0v-1.2" fill="none" stroke="#b4b7ba" stroke-width="0.6"/><ellipse cx="6.4" cy="26.4" rx="2.6" ry="1.6" fill="#f3f4f5" stroke="#b4b7ba" stroke-width="0.6"/><ellipse cx="6.4" cy="26.4" rx="1.4300000000000002" ry="0.8800000000000001" fill="none" stroke="#b4b7ba" stroke-width="0.4"/><ellipse cx="13.6" cy="25.0" rx="2.9" ry="1.8" fill="#9a9da0"/><ellipse cx="13.6" cy="24.4" rx="2.6" ry="1.6" fill="#ffffff"/><rect x="11.0" y="23.2" width="5.2" height="1.2" fill="#ffffff"/><path d="M11.0 23.2v1.2a2.6 1.6 0 0 0 5.2 0v-1.2" fill="none" stroke="#b4b7ba" stroke-width="0.6"/><ellipse cx="13.6" cy="23.2" rx="2.6" ry="1.6" fill="#f3f4f5" stroke="#b4b7ba" stroke-width="0.6"/><ellipse cx="13.6" cy="23.2" rx="1.4300000000000002" ry="0.8800000000000001" fill="none" stroke="#b4b7ba" stroke-width="0.4"/><ellipse cx="20.9" cy="21.900000000000002" rx="2.9" ry="1.8" fill="#9a9da0"/><ellipse cx="20.9" cy="21.3" rx="2.6" ry="1.6" fill="#ffffff"/><rect x="18.299999999999997" y="20.1" width="5.2" height="1.2" fill="#ffffff"/><path d="M18.299999999999997 20.1v1.2a2.6 1.6 0 0 0 5.2 0v-1.2" fill="none" stroke="#b4b7ba" stroke-width="0.6"/><ellipse cx="20.9" cy="20.1" rx="2.6" ry="1.6" fill="#f3f4f5" stroke="#b4b7ba" stroke-width="0.6"/><ellipse cx="20.9" cy="20.1" rx="1.4300000000000002" ry="0.8800000000000001" fill="none" stroke="#b4b7ba" stroke-width="0.4"/><ellipse cx="28.2" cy="18.7" rx="2.9" ry="1.8" fill="#9a9da0"/><ellipse cx="28.2" cy="18.099999999999998" rx="2.6" ry="1.6" fill="#ffffff"/><rect x="25.599999999999998" y="16.9" width="5.2" height="1.2" fill="#ffffff"/><path d="M25.599999999999998 16.9v1.2a2.6 1.6 0 0 0 5.2 0v-1.2" fill="none" stroke="#b4b7ba" stroke-width="0.6"/><ellipse cx="28.2" cy="16.9" rx="2.6" ry="1.6" fill="#f3f4f5" stroke="#b4b7ba" stroke-width="0.6"/><ellipse cx="28.2" cy="16.9" rx="1.4300000000000002" ry="0.8800000000000001" fill="none" stroke="#b4b7ba" stroke-width="0.4"/><ellipse cx="35.5" cy="15.499999999999998" rx="2.9" ry="1.8" fill="#9a9da0"/><ellipse cx="35.5" cy="14.899999999999999" rx="2.6" ry="1.6" fill="#ffffff"/><rect x="32.9" y="13.7" width="5.2" height="1.2" fill="#ffffff"/><path d="M32.9 13.7v1.2a2.6 1.6 0 0 0 5.2 0v-1.2" fill="none" stroke="#b4b7ba" stroke-width="0.6"/><ellipse cx="35.5" cy="13.7" rx="2.6" ry="1.6" fill="#f3f4f5" stroke="#b4b7ba" stroke-width="0.6"/><ellipse cx="35.5" cy="13.7" rx="1.4300000000000002" ry="0.8800000000000001" fill="none" stroke="#b4b7ba" stroke-width="0.4"/><ellipse cx="42.7" cy="12.399999999999999" rx="2.9" ry="1.8" fill="#9a9da0"/><ellipse cx="42.7" cy="11.799999999999999" rx="2.6" ry="1.6" fill="#ffffff"/><rect x="40.1" y="10.6" width="5.2" height="1.2" fill="#ffffff"/><path d="M40.1 10.6v1.2a2.6 1.6 0 0 0 5.2 0v-1.2" fill="none" stroke="#b4b7ba" stroke-width="0.6"/><ellipse cx="42.7" cy="10.6" rx="2.6" ry="1.6" fill="#f3f4f5" stroke="#b4b7ba" stroke-width="0.6"/><ellipse cx="42.7" cy="10.6" rx="1.4300000000000002" ry="0.8800000000000001" fill="none" stroke="#b4b7ba" stroke-width="0.4"/></svg></div>
<div class="nm" style="top:569.25px;letter-spacing:0.113px;">Brick 1 x 6</div>
<div class="sw" style="top:569.65px;background:#FFFFFF"></div>
<div class="cn" style="top:569.25px;letter-spacing:0.525px;">White</div>
<div class="qt" style="top:569.25px">2</div>
<div class="ig" style="left:857px;top:562.15px;width:118px"><div class="b" style="left:72px;width:24px"><svg class="a" style="left:0.5px;top:6.5px" width="20" height="20" viewBox="0 0 20 20" fill="none" stroke="#212529" stroke-width="1.15" stroke-linejoin="round"><path d="M5.65 5.4H12.6L14.5 7.3V14.4H5.65Z"/><path d="M7.9 14.3V11.6H12.1V14.3"/></svg></div><div class="b" style="left:95px;width:23px"><svg class="a" style="left:0.0px;top:6.5px" width="20" height="20" viewBox="0 0 20 20" fill="none" stroke="#dc3545" stroke-width="1.05" stroke-linejoin="round"><path d="M10.4 5.2L14.8 9.5 10 14.3H8.5L4.9 10.8Z"/><path d="M8.5 7.1l4 4.1M8.5 14.4h6.3"/></svg></div></div>
<div class="ig" style="left:995px;top:562.15px;width:121px"><div class="b" style="left:76px;width:24px"><svg class="a" style="left:0.5px;top:6.5px" width="20" height="20" viewBox="0 0 20 20" fill="none" stroke="#212529" stroke-width="1.15" stroke-linejoin="round"><path d="M5.65 5.4H12.6L14.5 7.3V14.4H5.65Z"/><path d="M7.9 14.3V11.6H12.1V14.3"/></svg></div><div class="b" style="left:99px;width:22px"><svg class="a" style="left:-0.5px;top:6.5px" width="20" height="20" viewBox="0 0 20 20" fill="none" stroke="#dc3545" stroke-width="1.05" stroke-linejoin="round"><path d="M10.4 5.2L14.8 9.5 10 14.3H8.5L4.9 10.8Z"/><path d="M8.5 7.1l4 4.1M8.5 14.4h6.3"/></svg></div></div>
<div class="cb" style="top:572.15px"></div>
<div class="row st" style="top:607px;height:54px"></div>
<div class="img" style="top:609.15px"><svg width="50" height="50" viewBox="0 0 50 50"><polygon points="0.20,22.80 4.20,16.70 27.00,6.20 35.00,16.70 49.60,30.20 49.60,33.30 20.90,45.10 0.50,28.40" fill="#555657"/><defs><linearGradient id="dbg" x1="0.3" y1="0" x2="0.6" y2="1"><stop offset="0" stop-color="#4c4d4e"/><stop offset="1" stop-color="#7a7b7c"/></linearGradient></defs><polygon points="6.00,22.00 12.00,18.00 35.00,14.50 49.60,30.20 20.90,42.00" fill="url(#dbg)"/><path d="M6 22C10 30 16 36 20.9 42L20.9 45.1 0.5 28.4 0.2 22.8z" fill="#505152"/><polygon points="20.90,42.00 49.60,30.20 49.60,33.30 20.90,45.10" fill="#5a5b5c"/><path d="M6 22C10 30 16 36 20.9 42" stroke="#7a7b7c" stroke-width="0.8" fill="none"/><ellipse cx="11.8" cy="19.800000000000004" rx="6.2" ry="3.7" fill="#3f4041"/><ellipse cx="11.8" cy="19.200000000000003" rx="5.9" ry="3.5" fill="#5c5d5e"/><rect x="5.9" y="16.6" width="11.8" height="2.6" fill="#5c5d5e"/><ellipse cx="11.8" cy="16.6" rx="5.9" ry="3.5" fill="#6a6b6c"/><ellipse cx="28" cy="12.399999999999999" rx="6.2" ry="3.7" fill="#3f4041"/><ellipse cx="28" cy="11.799999999999999" rx="5.9" ry="3.5" fill="#5c5d5e"/><rect x="22.1" y="9.2" width="11.8" height="2.6" fill="#5c5d5e"/><ellipse cx="28" cy="9.2" rx="5.9" ry="3.5" fill="#6a6b6c"/></svg></div>
<div class="nm" style="top:623.75px;letter-spacing:0.169px;">Brick Curved 2 x 2 x 2/3 Two Studs and Curved Slope End</div>
<div class="sw" style="top:624.15px;background:#6C6E68"></div>
<div class="cn" style="top:623.75px;letter-spacing:0.3px;">Dark Bluish Gray</div>
<div class="qt" style="top:623.75px">1</div>
<div class="ig" style="left:857px;top:616.65px;width:118px"><div class="b" style="left:72px;width:24px"><svg class="a" style="left:0.5px;top:6.5px" width="20" height="20" viewBox="0 0 20 20" fill="none" stroke="#212529" stroke-width="1.15" stroke-linejoin="round"><path d="M5.65 5.4H12.6L14.5 7.3V14.4H5.65Z"/><path d="M7.9 14.3V11.6H12.1V14.3"/></svg></div><div class="b" style="left:95px;width:23px"><svg class="a" style="left:0.0px;top:6.5px" width="20" height="20" viewBox="0 0 20 20" fill="none" stroke="#dc3545" stroke-width="1.05" stroke-linejoin="round"><path d="M10.4 5.2L14.8 9.5 10 14.3H8.5L4.9 10.8Z"/><path d="M8.5 7.1l4 4.1M8.5 14.4h6.3"/></svg></div></div>
<div class="ig" style="left:995px;top:616.65px;width:121px"><div class="b" style="left:76px;width:24px"><svg class="a" style="left:0.5px;top:6.5px" width="20" height="20" viewBox="0 0 20 20" fill="none" stroke="#212529" stroke-width="1.15" stroke-linejoin="round"><path d="M5.65 5.4H12.6L14.5 7.3V14.4H5.65Z"/><path d="M7.9 14.3V11.6H12.1V14.3"/></svg></div><div class="b" style="left:99px;width:22px"><svg class="a" style="left:-0.5px;top:6.5px" width="20" height="20" viewBox="0 0 20 20" fill="none" stroke="#dc3545" stroke-width="1.05" stroke-linejoin="round"><path d="M10.4 5.2L14.8 9.5 10 14.3H8.5L4.9 10.8Z"/><path d="M8.5 7.1l4 4.1M8.5 14.4h6.3"/></svg></div></div>
<div class="cb" style="top:626.65px"></div>
<div class="row" style="top:661px;height:55px"></div>
<div class="img" style="top:663.65px"><svg width="50" height="50" viewBox="0 0 50 50"><polygon points="0.50,16.40 13.40,26.60 49.60,12.10 36.30,2.20" fill="#1d8a3b"/><polygon points="0.50,16.40 13.40,26.60 13.40,49.10 0.50,38.00" fill="#249b47"/><polygon points="13.40,26.60 49.60,12.10 49.30,33.10 13.40,49.10" fill="#2ba651"/><ellipse cx="15.8" cy="18.5" rx="6.1" ry="3.6" fill="#177533"/><ellipse cx="15.8" cy="17.9" rx="5.8" ry="3.4" fill="#27a04b"/><rect x="10.0" y="13.9" width="11.6" height="4.0" fill="#27a04b"/><ellipse cx="15.8" cy="13.9" rx="5.8" ry="3.4" fill="#33b159"/><ellipse cx="35" cy="10.0" rx="6.1" ry="3.6" fill="#177533"/><ellipse cx="35" cy="9.4" rx="5.8" ry="3.4" fill="#27a04b"/><rect x="29.2" y="5.4" width="11.6" height="4.0" fill="#27a04b"/><ellipse cx="35" cy="5.4" rx="5.8" ry="3.4" fill="#33b159"/><ellipse cx="26.6" cy="34.300000000000004" rx="5.4" ry="5.2" fill="#176f31"/><ellipse cx="25.2" cy="35.7" rx="5.4" ry="5.2" fill="#36b35b"/><ellipse cx="24.8" cy="36.0" rx="3.3480000000000003" ry="3.224" fill="#1f8a3d"/><ellipse cx="24.400000000000002" cy="36.5" rx="2.2680000000000002" ry="2.184" fill="#2ba651"/><ellipse cx="45.0" cy="26.1" rx="5.4" ry="5.2" fill="#176f31"/><ellipse cx="43.6" cy="27.5" rx="5.4" ry="5.2" fill="#36b35b"/><ellipse cx="43.2" cy="27.8" rx="3.3480000000000003" ry="3.224" fill="#1f8a3d"/><ellipse cx="42.800000000000004" cy="28.3" rx="2.2680000000000002" ry="2.184" fill="#2ba651"/></svg></div>
<div class="nm" style="top:678.25px;letter-spacing:0.12px;">Brick Special 1 x 2 with 2 Studs on 1 Side</div>
<div class="sw" style="top:678.65px;background:#237841"></div>
<div class="cn" style="top:678.25px;letter-spacing:0.15px;">Green</div>
<div class="qt" style="top:678.25px">1</div>
<div class="ig" style="left:857px;top:671.15px;width:118px"><div class="b" style="left:72px;width:24px"><svg class="a" style="left:0.5px;top:6.5px" width="20" height="20" viewBox="0 0 20 20" fill="none" stroke="#212529" stroke-width="1.15" stroke-linejoin="round"><path d="M5.65 5.4H12.6L14.5 7.3V14.4H5.65Z"/><path d="M7.9 14.3V11.6H12.1V14.3"/></svg></div><div class="b" style="left:95px;width:23px"><svg class="a" style="left:0.0px;top:6.5px" width="20" height="20" viewBox="0 0 20 20" fill="none" stroke="#dc3545" stroke-width="1.05" stroke-linejoin="round"><path d="M10.4 5.2L14.8 9.5 10 14.3H8.5L4.9 10.8Z"/><path d="M8.5 7.1l4 4.1M8.5 14.4h6.3"/></svg></div></div>
<div class="ig" style="left:995px;top:671.15px;width:121px"><div class="b" style="left:76px;width:24px"><svg class="a" style="left:0.5px;top:6.5px" width="20" height="20" viewBox="0 0 20 20" fill="none" stroke="#212529" stroke-width="1.15" stroke-linejoin="round"><path d="M5.65 5.4H12.6L14.5 7.3V14.4H5.65Z"/><path d="M7.9 14.3V11.6H12.1V14.3"/></svg></div><div class="b" style="left:99px;width:22px"><svg class="a" style="left:-0.5px;top:6.5px" width="20" height="20" viewBox="0 0 20 20" fill="none" stroke="#dc3545" stroke-width="1.05" stroke-linejoin="round"><path d="M10.4 5.2L14.8 9.5 10 14.3H8.5L4.9 10.8Z"/><path d="M8.5 7.1l4 4.1M8.5 14.4h6.3"/></svg></div></div>
<div class="cb" style="top:681.15px"></div>
<div class="row st" style="top:716px;height:54px"></div>
<div class="img" style="top:718.15px"><svg width="50" height="50" viewBox="0 0 50 50"><polygon points="0.50,16.40 36.30,2.20 49.60,12.10 49.30,33.10 13.40,49.10 0.50,38.00" fill="none" stroke="#b9bcbf" stroke-width="0.9"/><polygon points="0.50,16.40 13.40,26.60 49.60,12.10 36.30,2.20" fill="#a9acaf"/><polygon points="0.50,16.40 13.40,26.60 13.40,49.10 0.50,38.00" fill="#d6d9dc"/><polygon points="13.40,26.60 49.60,12.10 49.30,33.10 13.40,49.10" fill="#e3e6e9"/><ellipse cx="15.8" cy="18.5" rx="6.1" ry="3.6" fill="#9a9da0"/><ellipse cx="15.8" cy="17.9" rx="5.8" ry="3.4" fill="#ffffff"/><rect x="10.0" y="13.9" width="11.6" height="4.0" fill="#ffffff"/><path d="M10.0 13.9v4.0a5.8 3.4 0 0 0 11.6 0v-4.0" fill="none" stroke="#b4b7ba" stroke-width="0.6"/><ellipse cx="15.8" cy="13.9" rx="5.8" ry="3.4" fill="#f3f4f5" stroke="#b4b7ba" stroke-width="0.6"/><ellipse cx="15.8" cy="13.9" rx="3.19" ry="1.87" fill="none" stroke="#b4b7ba" stroke-width="0.4"/><ellipse cx="35" cy="10.0" rx="6.1" ry="3.6" fill="#9a9da0"/><ellipse cx="35" cy="9.4" rx="5.8" ry="3.4" fill="#ffffff"/><rect x="29.2" y="5.4" width="11.6" height="4.0" fill="#ffffff"/><path d="M29.2 5.4v4.0a5.8 3.4 0 0 0 11.6 0v-4.0" fill="none" stroke="#b4b7ba" stroke-width="0.6"/><ellipse cx="35" cy="5.4" rx="5.8" ry="3.4" fill="#f3f4f5" stroke="#b4b7ba" stroke-width="0.6"/><ellipse cx="35" cy="5.4" rx="3.19" ry="1.87" fill="none" stroke="#b4b7ba" stroke-width="0.4"/><ellipse cx="26.6" cy="34.300000000000004" rx="5.4" ry="5.2" fill="#a9acaf"/><ellipse cx="25.2" cy="35.7" rx="5.4" ry="5.2" fill="#f8f9fa"/><ellipse cx="24.8" cy="36.0" rx="3.3480000000000003" ry="3.224" fill="#cdd0d3"/><ellipse cx="24.400000000000002" cy="36.5" rx="2.2680000000000002" ry="2.184" fill="#e3e6e9"/><ellipse cx="45.0" cy="26.1" rx="5.4" ry="5.2" fill="#a9acaf"/><ellipse cx="43.6" cy="27.5" rx="5.4" ry="5.2" fill="#f8f9fa"/><ellipse cx="43.2" cy="27.8" rx="3.3480000000000003" ry="3.224" fill="#cdd0d3"/><ellipse cx="42.800000000000004" cy="28.3" rx="2.2680000000000002" ry="2.184" fill="#e3e6e9"/></svg></div>
<div class="nm" style="top:732.75px;letter-spacing:0.12px;">Brick Special 1 x 2 with 2 Studs on 1 Side</div>
<div class="sw" style="top:733.15px;background:#FFFFFF"></div>
<div class="cn" style="top:732.75px;letter-spacing:0.525px;">White</div>
<div class="qt" style="top:732.75px">2</div>
<div class="ig" style="left:857px;top:725.65px;width:118px"><div class="b" style="left:72px;width:24px"><svg class="a" style="left:0.5px;top:6.5px" width="20" height="20" viewBox="0 0 20 20" fill="none" stroke="#212529" stroke-width="1.15" stroke-linejoin="round"><path d="M5.65 5.4H12.6L14.5 7.3V14.4H5.65Z"/><path d="M7.9 14.3V11.6H12.1V14.3"/></svg></div><div class="b" style="left:95px;width:23px"><svg class="a" style="left:0.0px;top:6.5px" width="20" height="20" viewBox="0 0 20 20" fill="none" stroke="#dc3545" stroke-width="1.05" stroke-linejoin="round"><path d="M10.4 5.2L14.8 9.5 10 14.3H8.5L4.9 10.8Z"/><path d="M8.5 7.1l4 4.1M8.5 14.4h6.3"/></svg></div></div>
<div class="ig" style="left:995px;top:725.65px;width:121px"><div class="b" style="left:76px;width:24px"><svg class="a" style="left:0.5px;top:6.5px" width="20" height="20" viewBox="0 0 20 20" fill="none" stroke="#212529" stroke-width="1.15" stroke-linejoin="round"><path d="M5.65 5.4H12.6L14.5 7.3V14.4H5.65Z"/><path d="M7.9 14.3V11.6H12.1V14.3"/></svg></div><div class="b" style="left:99px;width:22px"><svg class="a" style="left:-0.5px;top:6.5px" width="20" height="20" viewBox="0 0 20 20" fill="none" stroke="#dc3545" stroke-width="1.05" stroke-linejoin="round"><path d="M10.4 5.2L14.8 9.5 10 14.3H8.5L4.9 10.8Z"/><path d="M8.5 7.1l4 4.1M8.5 14.4h6.3"/></svg></div></div>
<div class="cb" style="top:735.65px"></div>
<div class="row" style="top:770px;height:55px"></div>
<div class="img" style="top:772.65px"><svg width="50" height="50" viewBox="0 0 50 50"><polygon points="5.40,12.50 33.80,0.70 44.30,8.10 44.30,36.50 14.70,49.50 5.40,44.00" fill="none" stroke="#b9bcbf" stroke-width="0.9"/><polygon points="5.40,12.50 14.70,19.25 44.30,8.10 33.80,0.70" fill="#a9acaf"/><polygon points="5.40,12.50 14.70,19.25 14.70,49.50 5.40,44.00" fill="#d6d9dc"/><polygon points="14.70,19.25 44.30,8.10 44.30,36.50 14.70,49.50" fill="#e3e6e9"/><ellipse cx="17.5" cy="13.1" rx="5.0" ry="3.0" fill="#9a9da0"/><ellipse cx="17.5" cy="12.5" rx="4.7" ry="2.8" fill="#ffffff"/><rect x="12.8" y="9.5" width="9.4" height="3.0" fill="#ffffff"/><path d="M12.8 9.5v3.0a4.7 2.8 0 0 0 9.4 0v-3.0" fill="none" stroke="#b4b7ba" stroke-width="0.6"/><ellipse cx="17.5" cy="9.5" rx="4.7" ry="2.8" fill="#f3f4f5" stroke="#b4b7ba" stroke-width="0.6"/><ellipse cx="17.5" cy="9.5" rx="2.5850000000000004" ry="1.54" fill="none" stroke="#b4b7ba" stroke-width="0.4"/><ellipse cx="31.5" cy="6.6" rx="5.0" ry="3.0" fill="#9a9da0"/><ellipse cx="31.5" cy="6.0" rx="4.7" ry="2.8" fill="#ffffff"/><rect x="26.8" y="3.0" width="9.4" height="3.0" fill="#ffffff"/><path d="M26.8 3.0v3.0a4.7 2.8 0 0 0 9.4 0v-3.0" fill="none" stroke="#b4b7ba" stroke-width="0.6"/><ellipse cx="31.5" cy="3.0" rx="4.7" ry="2.8" fill="#f3f4f5" stroke="#b4b7ba" stroke-width="0.6"/><ellipse cx="31.5" cy="3.0" rx="2.5850000000000004" ry="1.54" fill="none" stroke="#b4b7ba" stroke-width="0.4"/><ellipse cx="25.3" cy="25.400000000000002" rx="4.4" ry="4.4" fill="#a9acaf"/><ellipse cx="23.9" cy="26.8" rx="4.4" ry="4.4" fill="#f8f9fa"/><ellipse cx="23.5" cy="27.1" rx="2.728" ry="2.728" fill="#cdd0d3"/><ellipse cx="23.1" cy="27.6" rx="1.848" ry="1.848" fill="#e3e6e9"/><ellipse cx="39.3" cy="18.900000000000002" rx="4.4" ry="4.4" fill="#a9acaf"/><ellipse cx="37.9" cy="20.3" rx="4.4" ry="4.4" fill="#f8f9fa"/><ellipse cx="37.5" cy="20.6" rx="2.728" ry="2.728" fill="#cdd0d3"/><ellipse cx="37.1" cy="21.1" rx="1.848" ry="1.848" fill="#e3e6e9"/><ellipse cx="25.3" cy="39.4" rx="4.4" ry="4.4" fill="#a9acaf"/><ellipse cx="23.9" cy="40.8" rx="4.4" ry="4.4" fill="#f8f9fa"/><ellipse cx="23.5" cy="41.099999999999994" rx="2.728" ry="2.728" fill="#cdd0d3"/><ellipse cx="23.1" cy="41.599999999999994" rx="1.848" ry="1.848" fill="#e3e6e9"/><ellipse cx="39.3" cy="32.9" rx="4.4" ry="4.4" fill="#a9acaf"/><ellipse cx="37.9" cy="34.3" rx="4.4" ry="4.4" fill="#f8f9fa"/><ellipse cx="37.5" cy="34.599999999999994" rx="2.728" ry="2.728" fill="#cdd0d3"/><ellipse cx="37.1" cy="35.099999999999994" rx="1.848" ry="1.848" fill="#e3e6e9"/></svg></div>
<div class="nm" style="top:787.25px;letter-spacing:0.132px;">Brick Special 1 x 2 x 1 2/3 with 4 Studs on 1 Side</div>
<div class="sw" style="top:787.65px;background:#FFFFFF"></div>
<div class="cn" style="top:787.25px;letter-spacing:0.525px;">White</div>
<div class="qt" style="top:787.25px">4</div>
<div class="ig" style="left:857px;top:780.15px;width:118px"><div class="b" style="left:72px;width:24px"><svg class="a" style="left:0.5px;top:6.5px" width="20" height="20" viewBox="0 0 20 20" fill="none" stroke="#212529" stroke-width="1.15" stroke-linejoin="round"><path d="M5.65 5.4H12.6L14.5 7.3V14.4H5.65Z"/><path d="M7.9 14.3V11.6H12.1V14.3"/></svg></div><div class="b" style="left:95px;width:23px"><svg class="a" style="left:0.0px;top:6.5px" width="20" height="20" viewBox="0 0 20 20" fill="none" stroke="#dc3545" stroke-width="1.05" stroke-linejoin="round"><path d="M10.4 5.2L14.8 9.5 10 14.3H8.5L4.9 10.8Z"/><path d="M8.5 7.1l4 4.1M8.5 14.4h6.3"/></svg></div></div>
<div class="ig" style="left:995px;top:780.15px;width:121px"><div class="b" style="left:76px;width:24px"><svg class="a" style="left:0.5px;top:6.5px" width="20" height="20" viewBox="0 0 20 20" fill="none" stroke="#212529" stroke-width="1.15" stroke-linejoin="round"><path d="M5.65 5.4H12.6L14.5 7.3V14.4H5.65Z"/><path d="M7.9 14.3V11.6H12.1V14.3"/></svg></div><div class="b" style="left:99px;width:22px"><svg class="a" style="left:-0.5px;top:6.5px" width="20" height="20" viewBox="0 0 20 20" fill="none" stroke="#dc3545" stroke-width="1.05" stroke-linejoin="round"><path d="M10.4 5.2L14.8 9.5 10 14.3H8.5L4.9 10.8Z"/><path d="M8.5 7.1l4 4.1M8.5 14.4h6.3"/></svg></div></div>
<div class="cb" style="top:790.15px"></div>
<div class="row st" style="top:825px;height:54px"></div>
<div class="img" style="top:827.15px"><svg width="50" height="50" viewBox="0 0 50 50"><rect x="19.4" y="33" width="10.2" height="18" fill="#c4b076"/><rect x="21.5" y="33" width="4" height="18" fill="#d2c087"/><path d="M12 12.5L37.8 12.5 30.6 35 18.4 35z" fill="#cbb77d"/><path d="M15 13L23 13 22 35 18.4 35z" fill="#bba86f"/><ellipse cx="24.9" cy="13" rx="13" ry="5.8" fill="#a8955f"/><ellipse cx="24.9" cy="12" rx="12.2" ry="4.9" fill="#cfbd84"/><ellipse cx="24.9" cy="10.5" rx="9" ry="3.6" fill="#c4b075"/><ellipse cx="24.9" cy="8" rx="7.4" ry="4.1" fill="#a99561"/><ellipse cx="24.9" cy="7.2" rx="6.6" ry="3.5" fill="#dccb93"/><ellipse cx="24.9" cy="6.9" rx="4.4" ry="2.3" fill="#c3af74"/><ellipse cx="24.9" cy="7.4" rx="3.8" ry="1.8" fill="#d8c68c"/></svg></div>
<div class="nm" style="top:841.75px;letter-spacing:0.265px;">Cone 1 x 1 Inverted with Bar at Bottom (Ice Cream Cone)</div>
<div class="sw" style="top:842.15px;background:#E4CD9E"></div>
<div class="cn" style="top:841.75px;letter-spacing:0.5px;">Tan</div>
<div class="qt" style="top:841.75px">3</div>
<div class="ig" style="left:857px;top:834.65px;width:118px"><div class="b" style="left:72px;width:24px"><svg class="a" style="left:0.5px;top:6.5px" width="20" height="20" viewBox="0 0 20 20" fill="none" stroke="#212529" stroke-width="1.15" stroke-linejoin="round"><path d="M5.65 5.4H12.6L14.5 7.3V14.4H5.65Z"/><path d="M7.9 14.3V11.6H12.1V14.3"/></svg></div><div class="b" style="left:95px;width:23px"><svg class="a" style="left:0.0px;top:6.5px" width="20" height="20" viewBox="0 0 20 20" fill="none" stroke="#dc3545" stroke-width="1.05" stroke-linejoin="round"><path d="M10.4 5.2L14.8 9.5 10 14.3H8.5L4.9 10.8Z"/><path d="M8.5 7.1l4 4.1M8.5 14.4h6.3"/></svg></div></div>
<div class="ig" style="left:995px;top:834.65px;width:121px"><div class="b" style="left:76px;width:24px"><svg class="a" style="left:0.5px;top:6.5px" width="20" height="20" viewBox="0 0 20 20" fill="none" stroke="#212529" stroke-width="1.15" stroke-linejoin="round"><path d="M5.65 5.4H12.6L14.5 7.3V14.4H5.65Z"/><path d="M7.9 14.3V11.6H12.1V14.3"/></svg></div><div class="b" style="left:99px;width:22px"><svg class="a" style="left:-0.5px;top:6.5px" width="20" height="20" viewBox="0 0 20 20" fill="none" stroke="#dc3545" stroke-width="1.05" stroke-linejoin="round"><path d="M10.4 5.2L14.8 9.5 10 14.3H8.5L4.9 10.8Z"/><path d="M8.5 7.1l4 4.1M8.5 14.4h6.3"/></svg></div></div>
<div class="cb" style="top:844.65px"></div>
</div></body></html>
